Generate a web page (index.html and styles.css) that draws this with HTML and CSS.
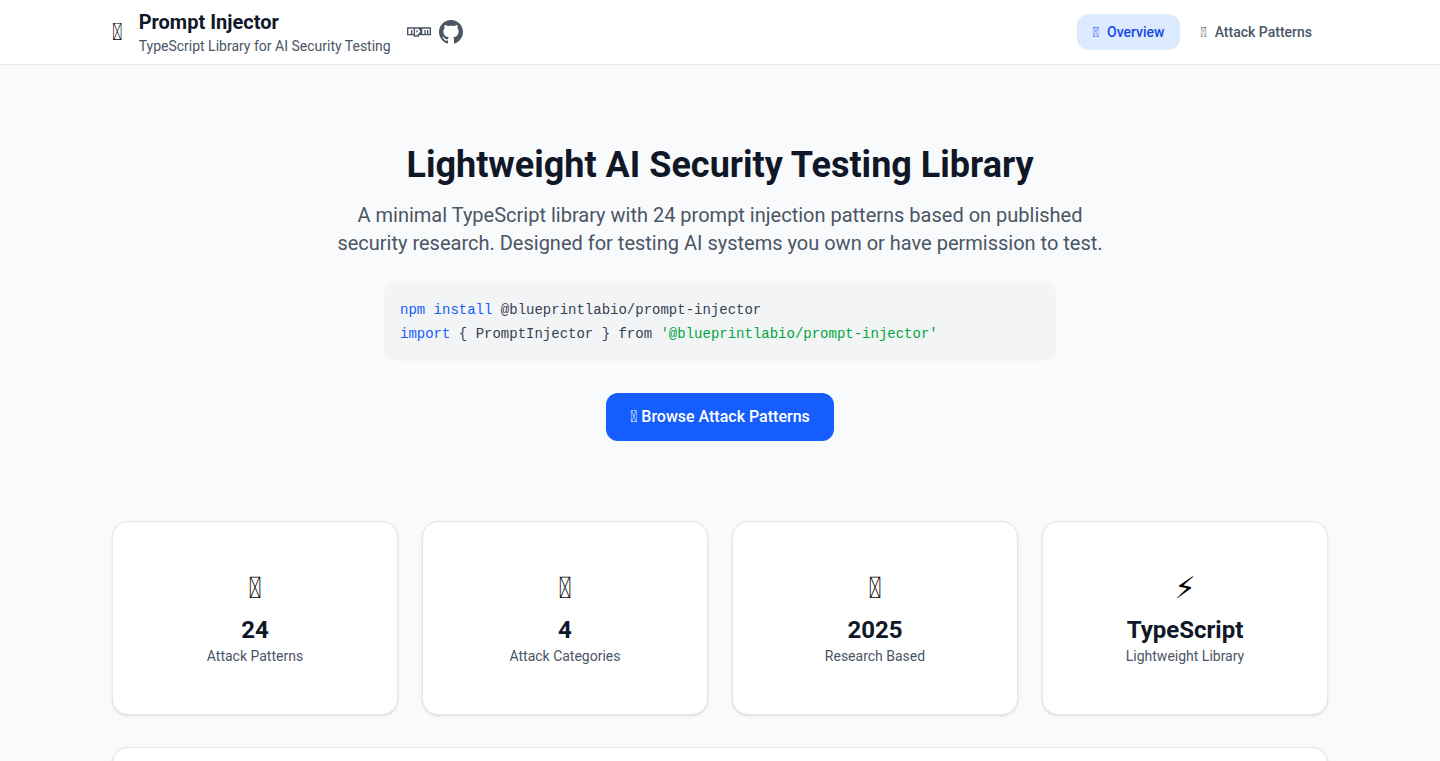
FILE: index.html
```html
<!DOCTYPE html>
<html lang="en">
<head>
<meta charset="utf-8">
<title>Prompt Injector</title>
<link rel="stylesheet" href="styles.css">
</head>
<body>
<header class="header">
  <div class="container header-row">
    <div class="brand">
      <span class="brand-icon" aria-hidden="true">&#x10FFFD;</span>
      <div>
        <h1 class="brand-name">Prompt Injector</h1>
        <p class="brand-tagline">TypeScript Library for AI Security Testing</p>
      </div>
      <div class="brand-links">
        <a href="#npm" aria-label="npm"><svg width="24" height="24" viewBox="0 0 24 24" fill="currentColor" fill-rule="evenodd"><path d="M0 7.334v8h6.666v1.332H12v-1.332h12v-8H0zM1.335 8.667h5.331v5.331H5.334v-4H3.999v4H1.335zM8 8.667h3.4l2 2.6-2 2.732h-.735v1.336H8zM9.4 10l1.9 1.35-1.9 1.35zM15.3 8.667h7.367v5.331h-1.33v-4h-1.336v4h-1.335v-4h-1.33v4H15.3z"/></svg></a>
        <a href="#github" aria-label="GitHub"><svg width="24" height="24" viewBox="0 0 24 24" fill="currentColor"><path d="M12 0c-6.626 0-12 5.373-12 12 0 5.302 3.438 9.8 8.207 11.387.599.111.793-.261.793-.577v-2.234c-3.338.726-4.033-1.416-4.033-1.416-.546-1.387-1.333-1.756-1.333-1.756-1.089-.745.083-.729.083-.729 1.205.084 1.839 1.237 1.839 1.237 1.07 1.834 2.807 1.304 3.492.997.107-.775.418-1.305.762-1.604-2.665-.305-5.467-1.334-5.467-5.931 0-1.311.469-2.381 1.236-3.221-.124-.303-.535-1.524.117-3.176 0 0 1.008-.322 3.301 1.23.957-.266 1.983-.399 3.003-.404 1.02.005 2.047.138 3.006.404 2.291-1.552 3.297-1.23 3.297-1.23.653 1.653.242 2.874.118 3.176.77.84 1.235 1.911 1.235 3.221 0 4.609-2.807 5.624-5.479 5.921.43.372.823 1.102.823 2.222v3.293c0 .319.192.694.801.576 4.765-1.589 8.199-6.086 8.199-11.386 0-6.627-5.373-12-12-12z"/></svg></a>
      </div>
    </div>
    <nav class="nav">
      <button class="tab tab-active" type="button"><span aria-hidden="true">&#x10FFFD;</span>Overview</button>
      <button class="tab" type="button"><span aria-hidden="true">&#x10FFFD;</span>Attack Patterns</button>
    </nav>
  </div>
</header>
<main class="container main">
  <section class="hero">
    <h2 class="hero-title">Lightweight AI Security Testing Library</h2>
    <p class="hero-text">A minimal TypeScript library with 24 prompt injection patterns based on published security research. Designed for testing AI systems you own or have permission to test.</p>
    <div class="snippet">
      <div><code><span class="keyword">npm install</span> @blueprintlabio/prompt-injector</code></div>
      <div><code><span class="keyword">import</span> { PromptInjector } from <span class="string">'@blueprintlabio/prompt-injector'</span></code></div>
    </div>
    <button class="cta" type="button"><span aria-hidden="true">&#x10FFFD;</span> Browse Attack Patterns</button>
  </section>
  <section class="stats">
    <div class="card stat"><div class="stat-icon" aria-hidden="true">&#x10FFFD;</div><div class="stat-value">24</div><div class="stat-label">Attack Patterns</div></div>
    <div class="card stat"><div class="stat-icon" aria-hidden="true">&#x10FFFD;</div><div class="stat-value">4</div><div class="stat-label">Attack Categories</div></div>
    <div class="card stat"><div class="stat-icon" aria-hidden="true">&#x10FFFD;</div><div class="stat-value">2025</div><div class="stat-label">Research Based</div></div>
    <div class="card stat"><div class="stat-icon" aria-hidden="true">⚡&#xFE0E;</div><div class="stat-value">TypeScript</div><div class="stat-label">Lightweight Library</div></div>
  </section>
  <section class="card panel"></section>
</main>
</body>
</html>
```
FILE: styles.css
```css
* { box-sizing: border-box; margin: 0; padding: 0; }
body {
  background: #f9fafb;
  color: #101828;
  font-family: Roboto, "DejaVu Sans", sans-serif;
  font-size: 16px;
  line-height: 24px;
}
html { scrollbar-width: none; }
button { border: 0; font: inherit; cursor: pointer; }
.container { max-width: 1280px; margin: 0 auto; padding: 0 32px; }
.header { background: #fff; border-bottom: 1px solid #e5e7eb; }
.header-row { display: flex; justify-content: space-between; align-items: center; height: 64px; }
.brand { display: flex; align-items: center; }
.brand-icon { margin-right: 16px; font-size: 24px; line-height: 32px; color: #000; }
.brand-name { font-size: 20px; line-height: 28px; font-weight: 700; }
.brand-tagline { color: #4a5565; font-size: 14px; line-height: 20px; }
.brand-links { display: flex; gap: 8px; margin-left: 16px; }
.brand-links a { color: #4a5565; }
.brand-links svg { display: block; }
.nav { display: flex; gap: 4px; }
.tab {
  display: flex;
  gap: 8px;
  padding: 8px 16px;
  border-radius: 12px;
  background: transparent;
  color: #4a5565;
  font-size: 14px;
  line-height: 20px;
  font-weight: 500;
}
.tab-active { background: #dbeafe; color: #1447e6; }
.main { padding-top: 32px; }
.hero { padding: 48px 0; text-align: center; }
.hero-title { margin-bottom: 16px; font-size: 36px; line-height: 40px; font-weight: 700; }
.hero-text { max-width: 768px; margin: 0 auto 24px; color: #4a5565; font-size: 20px; line-height: 28px; }
.snippet {
  max-width: 672px;
  margin: 0 auto 32px;
  padding: 16px;
  border-radius: 12px;
  background: #f3f4f6;
  text-align: left;
}
.snippet code {
  color: #364153;
  font-family: "Liberation Mono", monospace;
  font-size: 14px;
  line-height: 20px;
}
.snippet .keyword { color: #155dfc; }
.snippet .string { color: #00a63e; }
.cta { padding: 12px 24px; border-radius: 12px; background: #155dfc; color: #fff; font-weight: 500; }
.stats { display: grid; grid-template-columns: repeat(4, 1fr); gap: 24px; margin: 32px 0; }
.card { border: 1px solid #e5e7eb; border-radius: 16px; background: #fff; box-shadow: 0 1px 3px rgba(0,0,0,.1), 0 1px 2px -1px rgba(0,0,0,.1); }
.stat { padding: 48px 24px; text-align: center; }
.stat-icon { margin-bottom: 8px; color: #000; font-size: 30px; line-height: 36px; }
.stat-value { font-size: 24px; line-height: 32px; font-weight: 700; }
.stat-label { color: #4a5565; font-size: 14px; line-height: 20px; }
.panel { min-height: 320px; }
```
